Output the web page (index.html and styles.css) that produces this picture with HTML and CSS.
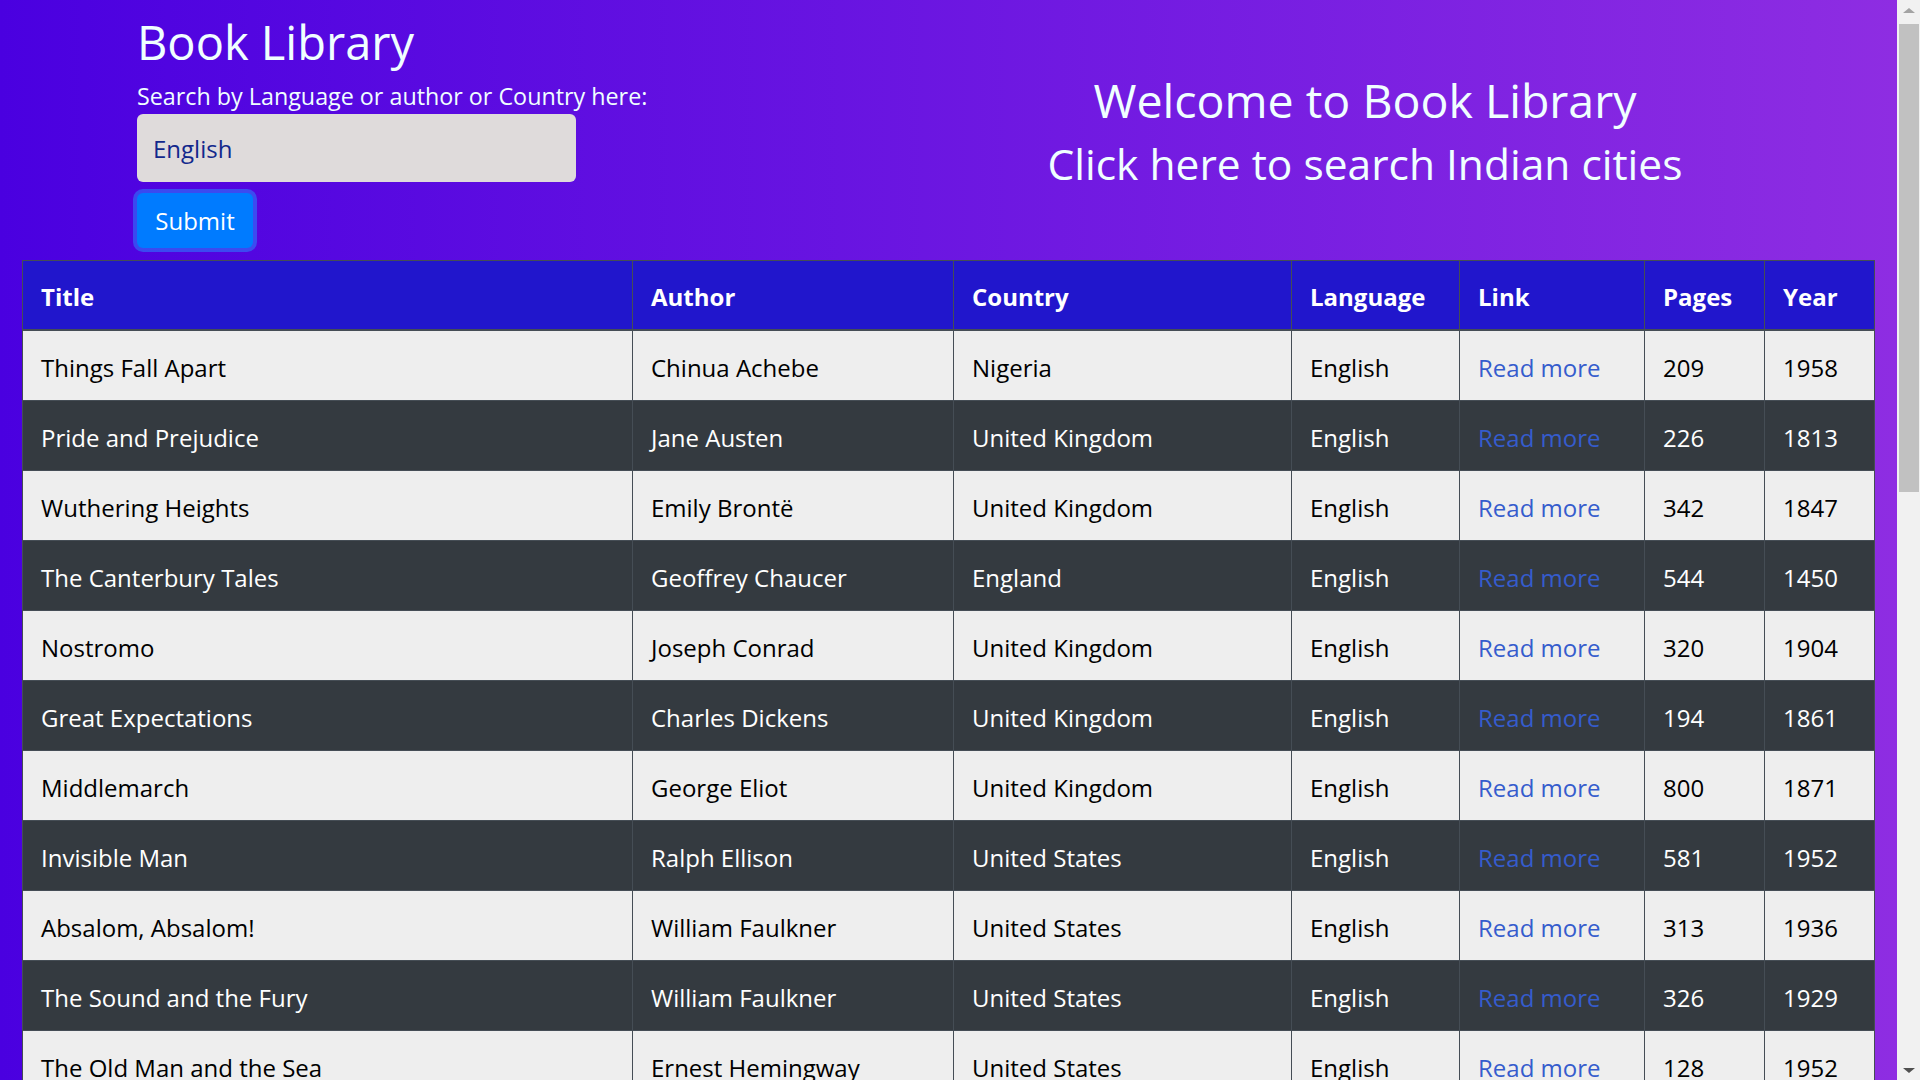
FILE: index.html
```html
<!DOCTYPE html>
<html lang="en">
<head>
<meta charset="utf-8">
<title>Book Library</title>
<link rel="stylesheet" href="styles.css">
</head>
<body>
<div class="viewport">
  <div class="page">
    <header class="top">
      <div class="top-left">
        <h1 class="brand">Book Library</h1>
        <form class="search">
          <label class="search-label" for="q">Search by Language or author or Country here:</label>
          <input class="search-input" id="q" type="text" value="English">
          <button class="btn-submit" type="button">Submit</button>
        </form>
      </div>
      <div class="top-right">
        <h2 class="welcome">Welcome to Book Library</h2>
        <a class="cities" href="#">Click here to search Indian cities</a>
      </div>
    </header>

    <table class="books">
      <colgroup>
        <col class="c-title"><col class="c-author"><col class="c-country"><col class="c-lang"><col class="c-link"><col class="c-pages"><col class="c-year">
      </colgroup>
      <thead>
        <tr><th>Title</th><th>Author</th><th>Country</th><th>Language</th><th>Link</th><th>Pages</th><th>Year</th></tr>
      </thead>
      <tbody>
        <tr class="light"><td>Things Fall Apart</td><td>Chinua Achebe</td><td>Nigeria</td><td>English</td><td><a href="#">Read more</a></td><td>209</td><td>1958</td></tr>
        <tr class="dark"><td>Pride and Prejudice</td><td>Jane Austen</td><td>United Kingdom</td><td>English</td><td><a href="#">Read more</a></td><td>226</td><td>1813</td></tr>
        <tr class="light"><td>Wuthering Heights</td><td>Emily Brontë</td><td>United Kingdom</td><td>English</td><td><a href="#">Read more</a></td><td>342</td><td>1847</td></tr>
        <tr class="dark"><td>The Canterbury Tales</td><td>Geoffrey Chaucer</td><td>England</td><td>English</td><td><a href="#">Read more</a></td><td>544</td><td>1450</td></tr>
        <tr class="light"><td>Nostromo</td><td>Joseph Conrad</td><td>United Kingdom</td><td>English</td><td><a href="#">Read more</a></td><td>320</td><td>1904</td></tr>
        <tr class="dark"><td>Great Expectations</td><td>Charles Dickens</td><td>United Kingdom</td><td>English</td><td><a href="#">Read more</a></td><td>194</td><td>1861</td></tr>
        <tr class="light"><td>Middlemarch</td><td>George Eliot</td><td>United Kingdom</td><td>English</td><td><a href="#">Read more</a></td><td>800</td><td>1871</td></tr>
        <tr class="dark"><td>Invisible Man</td><td>Ralph Ellison</td><td>United States</td><td>English</td><td><a href="#">Read more</a></td><td>581</td><td>1952</td></tr>
        <tr class="light"><td>Absalom, Absalom!</td><td>William Faulkner</td><td>United States</td><td>English</td><td><a href="#">Read more</a></td><td>313</td><td>1936</td></tr>
        <tr class="dark"><td>The Sound and the Fury</td><td>William Faulkner</td><td>United States</td><td>English</td><td><a href="#">Read more</a></td><td>326</td><td>1929</td></tr>
        <tr class="light"><td>The Old Man and the Sea</td><td>Ernest Hemingway</td><td>United States</td><td>English</td><td><a href="#">Read more</a></td><td>128</td><td>1952</td></tr>
        <tr class="dark"><td>Mrs Dalloway</td><td>Virginia Woolf</td><td>United Kingdom</td><td>English</td><td><a href="#">Read more</a></td><td>216</td><td>1925</td></tr>
      </tbody>
    </table>
  </div>
  <div class="scrollbar" aria-hidden="true">
    <div class="sb-btn"><span class="tri-up"></span></div>
    <div class="sb-track"><div class="sb-thumb"></div></div>
    <div class="sb-btn"><span class="tri-down"></span></div>
  </div>
</div>
</body>
</html>
```

FILE: styles.css
```css
html, body {
  margin: 0;
  padding: 0;
  height: 100%;
  overflow: hidden;
}

body {
  font-family: "Comic Sans MS", "Open Sans", sans-serif;
  color: #000;
}

.viewport {
  display: flex;
  height: 1080px;
  overflow: hidden;
}

.page {
  flex: 1;
  min-width: 0;
  background: linear-gradient(to right, #4a00e0, #8e2de2);
  overflow: hidden;
}

/* ---------- header ---------- */
.top {
  display: flex;
  align-items: center;
  height: 260px;
  box-sizing: border-box;
}

.top-left {
  width: 833px;
  box-sizing: border-box;
  padding-left: 137px;
  align-self: flex-start;
  padding-top: 13px;
}

.brand {
  margin: 0;
  font-size: 47px;
  line-height: 58px;
  font-weight: normal;
  color: #f0ffff;
}

.search {
  display: flex;
  flex-direction: column;
  align-items: flex-start;
}

.search-label {
  margin-top: 7px;
  font-size: 23.3px;
  line-height: 36px;
  color: #f0ffff;
}

.search-input {
  box-sizing: border-box;
  width: 439px;
  height: 68px;
  padding: 16px 16px;
  border: none;
  border-radius: 6px;
  background: #dfdbdb;
  color: #12288c;
  font-family: inherit;
  font-size: 24px;
  line-height: 36px;
  outline: none;
}

.btn-submit {
  margin-top: 11px;
  margin-left: 0;
  box-sizing: border-box;
  width: 116px;
  height: 55px;
  border: none;
  border-radius: 6px;
  background: #007bff;
  color: #fff;
  font-family: inherit;
  font-size: 24px;
  line-height: 36px;
  box-shadow: 0 0 0 4px rgba(38, 143, 255, 0.5);
  padding: 0;
}

.top-right {
  flex: 1;
  text-align: center;
  padding-top: 4px;
}

.welcome {
  margin: 0;
  font-size: 46.5px;
  line-height: 64px;
  font-weight: normal;
  color: #f0ffff;
}

.cities {
  display: block;
  font-size: 42.5px;
  line-height: 64px;
  color: #f0ffff;
  text-decoration: none;
}

/* ---------- table ---------- */
.books {
  width: calc(100% - 45px);
  margin-left: 22px;
  border-collapse: collapse;
  table-layout: fixed;
  font-size: 24px;
  line-height: 36px;
}

.c-title { width: 610px; }
.c-author { width: 321px; }
.c-country { width: 338px; }
.c-lang { width: 168px; }
.c-link { width: 185px; }
.c-pages { width: 120px; }
.c-year { width: 110px; }

.books th,
.books td {
  border: 1px solid #454d55;
  text-align: left;
  padding: 19px 18px 14px 18px;
  white-space: nowrap;
  overflow: hidden;
}

.books th {
  background: #2116cc;
  color: #fff;
  font-weight: bold;
  padding-top: 18px;
  padding-bottom: 14px;
  border-bottom: 2px solid #454d55;
}

.books tr.light td {
  background: #eeeeee;
  color: #000;
}

.books tr.dark td {
  background: #343a40;
  color: #fff;
}

.books td a {
  color: #355ccd;
  text-decoration: none;
}

/* ---------- fake scrollbar ---------- */
.scrollbar {
  width: 23px;
  background: #f1f1f1;
  display: flex;
  flex-direction: column;
  box-sizing: border-box;
  padding-left: 2px;
  padding-right: 1px;
}

.sb-btn {
  height: 20px;
  display: flex;
  align-items: center;
  justify-content: center;
}

.tri-up {
  width: 0;
  height: 0;
  border-left: 6px solid transparent;
  border-right: 6px solid transparent;
  border-bottom: 5px solid #a3a3a3;
}

.tri-down {
  width: 0;
  height: 0;
  border-left: 6px solid transparent;
  border-right: 6px solid transparent;
  border-top: 5px solid #505050;
}

.sb-track {
  flex: 1;
  padding-top: 4px;
}

.sb-thumb {
  height: 468px;
  background: #c1c1c1;
}
```
